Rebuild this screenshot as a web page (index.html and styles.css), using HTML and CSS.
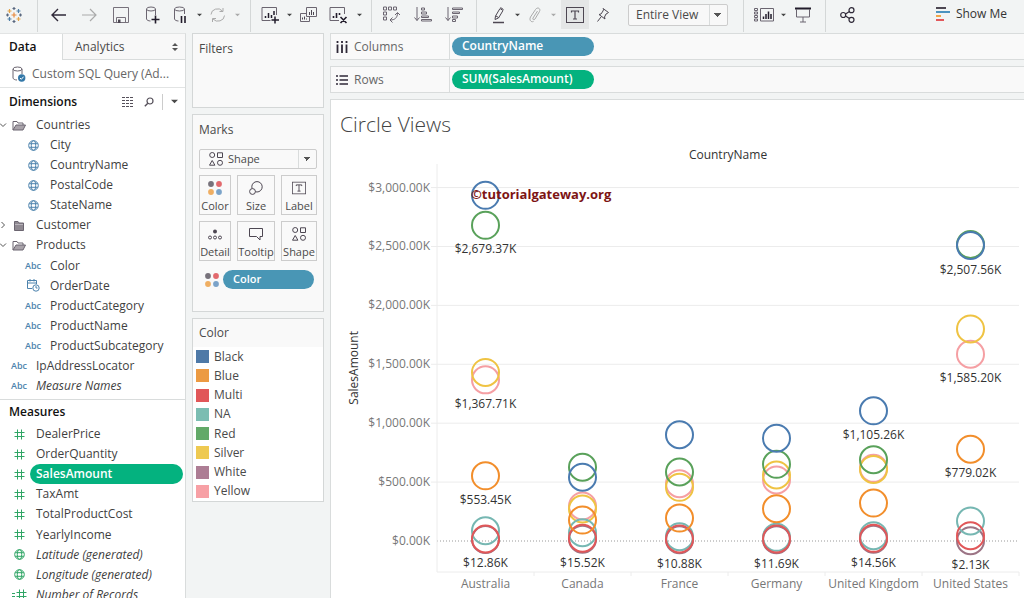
FILE: index.html
```html
<!DOCTYPE html>
<html lang="en">
<head>
<meta charset="utf-8">
<title>Circle Views</title>
<meta name="viewport" content="width=device-width, initial-scale=1">
<link rel="stylesheet" href="styles.css">
</head>
<body>
<svg class="defs" aria-hidden="true">
  <symbol id="globe" viewBox="0 0 11 11"><g fill="none" stroke="currentColor"><circle cx="5.500" cy="5.500" r="4.800"/><ellipse cx="5.500" cy="5.500" rx="2.200" ry="4.800"/><path d="M1.200 3.700h8.600M1.200 7.300h8.600"/></g></symbol>
  <symbol id="hash" viewBox="0 0 11 11"><path d="M3.500 .5v10M7.500 .5v10M.5 3.500h10M.5 7.500h10" fill="none" stroke="currentColor"/></symbol>
  <symbol id="folder-open" viewBox="0 0 14 11"><path d="M1 10V1.500h4l1 1.500h5v2" fill="none" stroke="#6b6570"/><path d="M1 10l3-5h9.500l-2.500 5z" fill="#a9a3aa" stroke="#6b6570"/></symbol>
  <symbol id="folder" viewBox="0 0 14 11"><path d="M2.500 10.500V1.500h3.500l1 1.500h4.500v7.500z" fill="#8f8991" stroke="#6b6570"/><path d="M3 4.500h8" stroke="#b9b4bb"/></symbol>
  <symbol id="chev-down" viewBox="0 0 8 8"><path d="M0 2.500l3 3 3-3" fill="none" stroke="#555"/></symbol>
  <symbol id="chev-right" viewBox="0 0 8 8"><path d="M1.500 1l3 3-3 3" fill="none" stroke="#555"/></symbol>
  <symbol id="caret" viewBox="0 0 6 4"><path d="M0 .5h6l-3 3z" fill="currentColor"/></symbol>
  <symbol id="shapes" viewBox="0 0 14 14"><g fill="none" stroke="#4d4752"><circle cx="3.200" cy="3" r="2.500"/><path d="M8.500 .8h5v4.700h-5zM3.200 8.500l2.700 4.700H.5z"/><circle cx="11" cy="10.800" r="2.500"/></g></symbol>
  <symbol id="dots" viewBox="0 0 14 14"><circle cx="3" cy="3" r="2.900" fill="#77727b"/><circle cx="11" cy="3" r="2.900" fill="#e2696d"/><circle cx="3" cy="11" r="2.900" fill="#efae62"/><circle cx="11" cy="11" r="2.900" fill="#7ba3c9"/></symbol>
  <symbol id="letter-frame" viewBox="0 0 18 16"><rect x=".5" y=".5" width="17" height="15" fill="none" stroke="#4d4752"/><path d="M5.500 5.500V4h7v1.500M9 4v8M7 12h4" fill="none" stroke="#4d4752" stroke-width="1.200"/></symbol>
</svg>

<div class="app">
<header class="toolbar">
  <div class="group logo">
    <svg width="16" height="16" viewBox="0 0 16 16" fill="none" stroke-width="1.200"><path stroke="#e8893c" d="M8 5.500v5M5.500 8h5"/><path stroke="#e2a24a" d="M3.500 2v4M1.500 4h4M12.500 10v4M10.500 12h4"/><path stroke="#4f7fa8" d="M12.500 2v4M10.500 4h4M3.500 10v4M1.500 12h4"/><path stroke="#59677f" d="M8 0v3M6.500 1.500h3M8 13v3M6.500 14.500h3M1.500 6.500v3M0 8h3M14.500 6.500v3M13 8h3"/></svg>
  </div>
  <div class="group g-file">
    <button class="tb w31" aria-label="Undo"><svg width="17" height="14" viewBox="0 0 17 14"><path d="M16 7H2M8 1L2 7l6 6" fill="none" stroke="#2f2938" stroke-width="1.400"/></svg></button>
    <button class="tb w31" aria-label="Redo"><svg width="17" height="14" viewBox="0 0 17 14"><path d="M1 7h14M9 1l6 6-6 6" fill="none" stroke="#aaa" stroke-width="1.200"/></svg></button>
    <button class="tb w31" aria-label="Save"><svg width="16" height="16" viewBox="0 0 16 16"><path d="M.5 .5h15v15H.5zM3.500 15.500v-5h9v5" fill="none" stroke="#77717b"/><path d="M5 12.500h2.500V16H5z" fill="#4d4752"/></svg></button>
    <button class="tb w31" aria-label="New data source"><svg width="16" height="18" viewBox="0 0 16 18"><g fill="none" stroke="#6b6570"><ellipse cx="7" cy="3" rx="4.500" ry="2"/><path d="M2.500 3v10c0 1 2 2 4 2M11.500 3v6"/></g><path d="M11.500 9.500v8M7.500 13.500h8" stroke="#221c2b" stroke-width="1.600"/></svg></button>
    <button class="tb w26" aria-label="Pause auto updates"><svg width="14" height="18" viewBox="0 0 14 18"><g fill="none" stroke="#6b6570"><ellipse cx="6.500" cy="3" rx="5" ry="2"/><path d="M1.500 3v10c0 1 2 2 4 2M11.500 3v5"/></g><path d="M8.500 10v7M12 10v7" stroke="#221c2b" stroke-width="1.600"/></svg></button>
    <button class="tb w12" aria-label="Pause options"><svg width="5" height="4"><use href="#caret"/></svg></button>
    <button class="tb w26 off" aria-label="Refresh"><svg width="18" height="16" viewBox="0 0 18 16"><path d="M2 7.500a6.500 6 0 0 1 11.500-3.500M15.500 8.500a6.500 6 0 0 1-11.500 3.500M10.500 4.500h3.500V1M7 11.500H3.500V15" fill="none" stroke="currentColor"/></svg></button>
    <button class="tb w12 off" aria-label="Refresh options"><svg width="5" height="4"><use href="#caret"/></svg></button>
  </div>
  <div class="group g-sheet">
    <button class="tb w26" aria-label="New worksheet"><svg width="19" height="18" viewBox="0 0 19 18"><path d="M9.500 14.500H1V1.500h14.500V9" fill="none" stroke="#6b6570"/><path d="M4.500 12v-2M7.500 12V7M10.500 12V9M13 9V5M14 10.500v7M10.500 14h7.500" stroke="#221c2b" stroke-width="1.500"/></svg></button>
    <button class="tb w12" aria-label="Worksheet options"><svg width="5" height="4"><use href="#caret"/></svg></button>
    <button class="tb w28" aria-label="Duplicate"><svg width="18" height="16" viewBox="0 0 18 16"><path d="M6.500 .5h10v9h-10zM6.500 6.500h-6v8h9v-5" fill="none" stroke="#6b6570"/><path d="M9.500 8V5M11.500 8V3M13.500 8V5M2.500 12.500v-2M4.500 12.500v-3M6.500 12.500v-1" stroke="#4d4752"/></svg></button>
    <button class="tb w30" aria-label="Clear sheet"><svg width="19" height="18" viewBox="0 0 19 18"><path d="M10 14.500H1V1.500h14.500V8" fill="none" stroke="#6b6570"/><path d="M4.500 12v-2M7.500 12V7M10.500 9V7M11.500 11l6 6M17.500 11l-6 6" stroke="#221c2b" stroke-width="1.600"/></svg></button>
    <button class="tb w12" aria-label="Clear options"><svg width="5" height="4"><use href="#caret"/></svg></button>
  </div>
  <div class="group g-sort">
    <button class="tb w31" aria-label="Swap rows and columns"><svg width="17" height="17" viewBox="0 0 17 17"><path d="M.5 1h3v3h-3zM5.500 1h3v3h-3zM10.500 1h3v3h-3zM.5 6h3v3h-3zM.5 11h3v3h-3zM14.500 7c0 5-3 7-7 7M12 9l2.500-2.500L17 9M9.500 11.500L7 14l2.500 2.500" fill="none" stroke="#6b6570"/></svg></button>
    <button class="tb w31" aria-label="Sort ascending"><svg width="18" height="15" viewBox="0 0 18 15"><path d="M3 0v13.500M.5 10.500L3 13.500l2.500-3M7.500 1h3v2h-3zM7.500 5h5v2h-5zM7.500 9h7v1.500h-7zM7.500 12.500h10v1.500h-10z" fill="none" stroke="#6b6570"/></svg></button>
    <button class="tb w31" aria-label="Sort descending"><svg width="18" height="15" viewBox="0 0 18 15"><path d="M3 0v13.500M.5 10.500L3 13.500l2.500-3M7.500 1h10v1.500h-10zM7.500 5h7v1.500h-7zM7.500 9h5v2h-5zM7.500 12.500h3v2h-3z" fill="none" stroke="#6b6570"/></svg></button>
  </div>
  <div class="group g-format">
    <button class="tb w26" aria-label="Highlight"><svg width="13" height="18" viewBox="0 0 13 18"><path d="M3.500 10L8 2.500l3 2-4.500 7.500-3.500 1.500zM8.500 1.500l3 2M4 10l2.500 1.500" fill="none" stroke="#4d4752"/><path d="M1 16.500h11" stroke="#4d4752" stroke-width="1.500"/></svg></button>
    <button class="tb w12" aria-label="Highlight options"><svg width="5" height="4"><use href="#caret"/></svg></button>
    <button class="tb w24 off" aria-label="Group members"><svg width="12" height="16" viewBox="0 0 12 16"><path d="M8.500 4L4 11c-.8 1.600 1 2.500 2 1l4.500-7.500c1.500-3-2-5-4-2L1.500 10c-1.500 3 .5 5.500 3 4.500" fill="none" stroke="currentColor"/></svg></button>
    <button class="tb w12 off" aria-label="Group options"><svg width="5" height="4"><use href="#caret"/></svg></button>
    <button class="tb on" aria-label="Show mark labels"><svg width="18" height="16"><use href="#letter-frame"/></svg></button>
    <button class="tb w28" aria-label="Fix axes"><svg width="14" height="16" viewBox="0 0 14 16"><path d="M7 1.500l5.500 4-1.500 1-1 .5-1.500 3 .5 2-6-4.500 2-.5 2-3 .5-1.500zM5 10l-3.500 4.500" fill="none" stroke="#4d4752"/></svg></button>
    <select class="fit" aria-label="Fit"><option>Entire View</option></select>
  </div>
  <div class="group g-show">
    <button class="tb w26" aria-label="Show cards"><svg width="20" height="14" viewBox="0 0 20 14"><path d="M.5 .5h3v2h-3zM.5 4h3v2h-3zM.5 7.500h3v2h-3zM.5 11h3v2h-3zM6.500 .5h13v12.500h-13z" fill="none" stroke="#6b6570"/><path d="M9.500 11V8.500M12 11V6M14.500 11V3.500M17 11V6" stroke="#221c2b" stroke-width="1.500"/></svg></button>
    <button class="tb w12" aria-label="Card options"><svg width="5" height="4"><use href="#caret"/></svg></button>
    <button class="tb w28" aria-label="Presentation mode"><svg width="16" height="16" viewBox="0 0 16 16"><path d="M0 1.500h16" stroke="#221c2b" stroke-width="2"/><path d="M1.500 2v8h13V2M8 10v5M5 15h6" fill="none" stroke="#6b6570"/></svg></button>
  </div>
  <button class="tb share" aria-label="Share"><svg width="15" height="16" viewBox="0 0 15 16"><g fill="none" stroke="#2f2938" stroke-width="1.200"><circle cx="3.200" cy="8" r="2.500"/><circle cx="11.500" cy="3.200" r="2.500"/><circle cx="11.500" cy="12.800" r="2.500"/><path d="M5.500 7l4-2.500M5.500 9l4 2.500"/></g></svg></button>
  <button class="showme"><svg width="14" height="14" viewBox="0 0 14 14"><path d="M0 1h10" stroke="#4d4752" stroke-width="2"/><path d="M0 5h14" stroke="#4c93c0" stroke-width="2"/><path d="M0 9h5" stroke="#f0a54a" stroke-width="2"/><path d="M0 13h8" stroke="#e2575b" stroke-width="2"/></svg>Show Me</button>
</header>

<main class="work">
  <aside class="data">
    <div class="tabs"><button class="tab active">Data</button><button class="tab">Analytics<svg width="6" height="8" viewBox="0 0 6 8"><path d="M0 3h6L3 0zM0 5h6L3 8z" fill="#555"/></svg></button></div>
    <div class="source"><svg width="14" height="16" viewBox="0 0 14 16"><g fill="none" stroke="#6b6570"><ellipse cx="5.500" cy="3" rx="4.500" ry="2"/><path d="M1 3v9c0 1 2 2 4 2M10 3v5"/></g><circle cx="9.700" cy="12" r="3.700" fill="#3378a8"/><path d="M8 12l1.300 1.300 2.300-2.600" fill="none" stroke="#fff"/></svg><span>Custom SQL Query (Ad...</span></div>
    <section class="fields">
      <div class="fields-head"><h2>Dimensions</h2>
        <button aria-label="View fields"><svg width="12" height="10" viewBox="0 0 12 10"><path d="M0 .5h12M0 3.500h12M0 6.500h12M0 9.500h12" stroke="#55505a" stroke-dasharray="3 1"/></svg></button>
        <button aria-label="Find field"><svg width="10" height="10" viewBox="0 0 10 10"><circle cx="6" cy="4" r="3" fill="none" stroke="#55505a" stroke-width="1.200"/><path d="M3.800 6.200L.8 9.200" stroke="#55505a" stroke-width="1.400"/></svg></button>
        <button class="menu" aria-label="Dimensions menu"><svg width="7" height="5"><use href="#caret"/></svg></button>
      </div>
      <ul class="list dims">
        <li class="folder"><svg class="chev"><use href="#chev-down"/></svg><svg class="fold"><use href="#folder-open"/></svg>Countries</li>
        <li class="child"><i><svg class="ic"><use href="#globe"/></svg></i>City</li>
        <li class="child"><i><svg class="ic"><use href="#globe"/></svg></i>CountryName</li>
        <li class="child"><i><svg class="ic"><use href="#globe"/></svg></i>PostalCode</li>
        <li class="child"><i><svg class="ic"><use href="#globe"/></svg></i>StateName</li>
        <li class="folder"><svg class="chev"><use href="#chev-right"/></svg><svg class="fold"><use href="#folder"/></svg>Customer</li>
        <li class="folder"><svg class="chev"><use href="#chev-down"/></svg><svg class="fold"><use href="#folder-open"/></svg>Products</li>
        <li class="child"><i>Abc</i>Color</li>
        <li class="child"><i><svg width="13" height="13" viewBox="0 0 13 13"><path d="M5 9.500H.5v-8h9V5M.5 4h9M3 0v2.500M7 0v2.500" fill="none" stroke="currentColor"/><circle cx="9" cy="9" r="3.200" fill="#fff" stroke="currentColor"/><path d="M9 7v2h1.500" fill="none" stroke="currentColor"/></svg></i>OrderDate</li>
        <li class="child"><i>Abc</i>ProductCategory</li>
        <li class="child"><i>Abc</i>ProductName</li>
        <li class="child"><i>Abc</i>ProductSubcategory</li>
        <li><i>Abc</i>IpAddressLocator</li>
        <li><i>Abc</i><em>Measure Names</em></li>
      </ul>
    </section>
    <section class="fields measures">
      <div class="fields-head"><h2>Measures</h2></div>
      <ul class="list meas">
        <li><i><svg class="ic"><use href="#hash"/></svg></i>DealerPrice</li>
        <li><i><svg class="ic"><use href="#hash"/></svg></i>OrderQuantity</li>
        <li class="picked"><i><svg class="ic"><use href="#hash"/></svg></i><b>SalesAmount</b></li>
        <li><i><svg class="ic"><use href="#hash"/></svg></i>TaxAmt</li>
        <li><i><svg class="ic"><use href="#hash"/></svg></i>TotalProductCost</li>
        <li><i><svg class="ic"><use href="#hash"/></svg></i>YearlyIncome</li>
        <li><i><svg class="ic"><use href="#globe"/></svg></i><em>Latitude (generated)</em></li>
        <li><i><svg class="ic"><use href="#globe"/></svg></i><em>Longitude (generated)</em></li>
        <li><i><svg width="15" height="11" viewBox="0 0 15 11"><path d="M0 4.500h3M0 7.500h3M7.500 .5v10M11.500 .5v10M4.500 3.500h10M4.500 7.500h10" fill="none" stroke="currentColor"/></svg></i><em>Number of Records</em></li>
      </ul>
    </section>
  </aside>

  <div class="cards">
    <section class="card filters"><h3>Filters</h3></section>
    <section class="card marks">
      <h3>Marks</h3>
      <div class="marktype"><svg width="14" height="14"><use href="#shapes"/></svg><select aria-label="Mark type"><option>Shape</option></select></div>
      <div class="markbtns">
        <button><svg width="14" height="14"><use href="#dots"/></svg>Color</button>
        <button><svg width="14" height="14" viewBox="0 0 14 14"><g fill="#f9f9f9" stroke="#4d4752"><circle cx="8" cy="5.800" r="5.200"/><circle cx="3.500" cy="10.500" r="2.900"/></g></svg>Size</button>
        <button><svg width="14" height="14"><use href="#letter-frame"/></svg>Label</button>
        <button><svg width="14" height="14" viewBox="0 0 14 14"><circle cx="7" cy="4.500" r="2" fill="#4d4752"/><g fill="none" stroke="#4d4752"><circle cx="2" cy="10.500" r="1.500"/><circle cx="7" cy="10.500" r="1.500"/><circle cx="12" cy="10.500" r="1.500"/></g></svg>Detail</button>
        <button><svg width="14" height="14" viewBox="0 0 14 14"><path d="M.5 1.500h13v8h-2.500v3.500l-3.500-3.500h-7z" fill="none" stroke="#4d4752"/></svg>Tooltip</button>
        <button><svg width="14" height="14"><use href="#shapes"/></svg>Shape</button>
      </div>
      <div class="encoding"><svg width="14" height="14"><use href="#dots"/></svg><span class="pill blue">Color</span></div>
    </section>
    <section class="card legend">
      <h3>Color</h3>
      <ul>
        <li><span class="sw black"></span>Black</li>
        <li><span class="sw orange"></span>Blue</li>
        <li><span class="sw multi"></span>Multi</li>
        <li><span class="sw na"></span>NA</li>
        <li><span class="sw green"></span>Red</li>
        <li><span class="sw silver"></span>Silver</li>
        <li><span class="sw white"></span>White</li>
        <li><span class="sw pink"></span>Yellow</li>
      </ul>
    </section>
  </div>

  <div class="sheet">
    <div class="shelf"><div class="shelf-name"><svg width="12" height="12" viewBox="0 0 12 12"><path d="M1.500 0v2M6 0v2M10.500 0v2M1.500 3.500V12M6 3.500V12M10.500 3.500V12" stroke="#2f2938" stroke-width="1.800"/></svg>Columns</div><span class="pill blue">CountryName</span></div>
    <div class="shelf"><div class="shelf-name"><svg width="12" height="10" viewBox="0 0 12 10"><path d="M0 1h2M0 5h2M0 9h2M3.500 1H12M3.500 5H12M3.500 9H12" stroke="#2f2938" stroke-width="1.600"/></svg>Rows</div><span class="pill green">SUM(SalesAmount)</span></div>
    <section class="view">
      <h1>Circle Views</h1>
      <div class="chart">
        <div class="colhead">CountryName</div>
        <div class="ytitle"><span>SalesAmount</span></div>
        <svg class="plot" id="plot" role="img" aria-label="Sales amount by country and color"></svg>
        <div class="countries" id="countries"></div>
      </div>
    </section>
  </div>
</main>
</div>
<script src="chart.js"></script>
</body>
</html>
```
FILE: styles.css
```css
* { box-sizing: border-box; }
body { margin: 0; background: #f2f4f4; color: #4a4a4a; font: 12px/16px "Open Sans", "Noto Sans", sans-serif; }
button, select { font: inherit; color: inherit; background: none; border: 0; padding: 0; margin: 0; }
h1, h2, h3, ul { margin: 0; padding: 0; font-weight: 400; font-size: inherit; list-style: none; }
.defs { position: absolute; width: 0; height: 0; }
.app { display: flex; flex-direction: column; height: 100vh; overflow: hidden; }

.toolbar { display: flex; flex: none; height: 32px; }
.group { display: flex; align-items: center; border-right: 1px solid #d4d7d7; padding-bottom: 3px; }
.logo { padding-left: 6px; padding-right: 15px; }
.g-file { padding-left: 5px; padding-right: 7px; }
.g-sheet { padding-left: 6px; padding-right: 6px; }
.g-sort { padding-left: 4px; padding-right: 7px; }
.g-format { padding-left: 8px; padding-right: 15px; }
.g-show { padding-left: 7px; padding-right: 8px; }
.tb { display: flex; align-items: center; justify-content: center; flex: none; height: 29px; color: #444; }
.tb svg { flex: none; }
.w12 { width: 12px; }
.w24 { width: 24px; }
.w26 { width: 26px; }
.w28 { width: 28px; }
.w30 { width: 30px; }
.w31 { width: 31px; }
.off { color: #aaa; }
.on { width: 28px; margin-left: 2px; background: #e4e6e6; }
.fit, .marktype select {
  appearance: none;
  background: linear-gradient(#d9dcdc, #d9dcdc) right 17px top 0 / 1px 100% no-repeat,
    linear-gradient(135deg, #555 50%, transparent 50%) right 5px center / 4px 4px no-repeat,
    linear-gradient(225deg, #555 50%, transparent 50%) right 9px center / 4px 4px no-repeat;
}
.fit { width: 100px; height: 22px; margin-left: 11px; padding-left: 7px; border: 1px solid #ccc; background-color: #f8f8f8; border-radius: 2px; }
.share { width: 28px; margin-left: 7px; }
.showme { display: flex; align-items: center; gap: 6px; height: 28px; margin-left: auto; padding-right: 17px; color: #333; }

.work { display: grid; grid-template-columns: 186px 132px minmax(0, 1fr); gap: 6px; flex: 1; min-height: 0; padding-top: 1px; }
.data { background: #fff; border-right: 1px solid #d9dcdc; border-top: 1px solid #e2e4e4; min-height: 0; overflow: hidden; }
.tabs { display: flex; height: 26px; }
.tab { padding-left: 12px; background: #f8f8f8; border-left: 1px solid #d9dcdc; border-bottom: 1px solid #d9dcdc; flex: 1; display: flex; align-items: center; justify-content: space-between; padding-right: 7px; }
.tab.active { flex: none; width: 62px; padding-left: 9px; background: #fff; border: 0; font-weight: 600; color: #111; }
.source { display: flex; align-items: center; gap: 6px; height: 28px; padding-left: 12px; border-bottom: 1px solid #e2e4e4; color: #666; white-space: nowrap; }
.fields-head { display: flex; align-items: center; height: 27px; padding-left: 9px; padding-right: 7px; gap: 10px; }
.fields-head h2 { flex: 1; font-weight: 600; color: #111; }
.fields-head button { display: flex; align-items: center; height: 16px; }
.fields-head .menu { border-left: 1px solid #ccc; padding-left: 8px; margin-left: -2px; }
.list { display: grid; grid-auto-rows: 1fr; color: #3f3f3f; }
.list li { display: flex; align-items: center; white-space: nowrap; }
.list i { display: flex; align-items: center; justify-content: center; width: 28px; margin-left: 5px; margin-right: 3px; font-style: normal; font-size: 9px; font-weight: 600; color: #4d83ad; }
.list .child i { margin-left: 19px; }
.chev { width: 8px; height: 8px; margin-right: 4px; }
.fold { width: 14px; height: 11px; margin-right: 10px; }
.ic { width: 11px; height: 11px; }
.dims { height: 281px; }
.meas { height: 181px; }
.measures { margin-top: 3px; border-top: 1px solid #d9dcdc; }
.measures .fields-head { height: 24px; }
.list.meas i { color: #2fa565; }
.picked b { flex: 1; height: 20px; line-height: 20px; margin-left: -6px; padding-left: 6px; margin-right: 2px; border-radius: 10px; background: #04b27f; color: #fff; font-weight: 600; }

.cards { display: flex; flex-direction: column; gap: 6px; }
.card { border: 1px solid #d4d7d7; background: #f9f9f9; }
.card h3 { padding-left: 6px; }
.filters { height: 75px; padding-top: 7px; }
.marks { height: 198px; padding-top: 7px; }
.marktype { display: flex; align-items: center; margin: 11px 6px 6px; height: 20px; border: 1px solid #ccc; border-radius: 2px; padding-left: 9px; gap: 5px; font-size: 11px; }
.marktype select { flex: 1; height: 18px; }
.markbtns { display: grid; grid-template-columns: 32px 38px 36px; gap: 6px; padding-left: 6px; }
.markbtns button { display: flex; flex-direction: column; align-items: center; justify-content: space-between; height: 40px; padding-top: 5px; border: 1px solid #ccc; font-size: 11px; line-height: 16px; }
.encoding { display: flex; align-items: center; gap: 4px; padding: 9px 9px 0 12px; }
.pill { border-radius: 10px; height: 19px; line-height: 18px; padding-left: 10px; color: #fff; font-weight: 600; }
.pill.blue { background: #4996b5; }
.pill.green { background: #04b27f; }
.encoding .pill { flex: 1; font-size: 11px; }
.legend h3 { padding-top: 6px; height: 28px; }
.legend ul { display: grid; grid-auto-rows: 1fr; height: 154px; background: #fff; }
.legend li { display: flex; align-items: center; gap: 5px; padding-left: 3px; }
.sw { width: 13px; height: 13px; }
.black { background: #4e79a7; }
.orange { background: #ec9a42; }
.multi { background: #e15759; }
.na { background: #7bbdb2; }
.green.sw { background: #62a968; }
.silver { background: #eec951; }
.white { background: #ad7d94; }
.pink { background: #f7a0a5; }

.sheet { display: flex; flex-direction: column; gap: 6px; min-height: 0; }
.shelf { display: flex; align-items: center; gap: 2px; flex: none; height: 27px; border: 1px solid #d9dcdc; border-right: 0; background: #f9f9f9; }
.shelf-name { display: flex; align-items: center; gap: 6px; width: 119px; height: 100%; padding-left: 5px; border-right: 1px solid #d9dcdc; color: #666; }
.shelf .pill { width: 142px; }
.view { display: flex; flex-direction: column; flex: 1; min-height: 0; border: solid #d9dcdc; border-width: 1px 0 0 1px; background: #fff; }
.view h1 { padding: 12px 0 11px 9px; font-size: 21px; line-height: 25px; font-weight: 300; color: #444; }
.chart { display: grid; flex: 1; min-height: 0; grid-template-columns: 106px minmax(0, 1fr); grid-template-rows: 16px minmax(0, 1fr) 26px; padding-right: 5px; }
.colhead { grid-column: 2; text-align: center; line-height: 13px; color: #333; }
.ytitle { display: flex; align-items: center; padding-left: 15px; color: #333; }
.ytitle span { writing-mode: vertical-rl; transform: rotate(180deg); }
.plot { width: 100%; height: 100%; overflow: visible; }
.plot text { font-size: 12px; }
.plot .tick { fill: #777; text-anchor: end; }
.plot .value { fill: #333; text-anchor: middle; }
.plot .mark { fill: none; stroke-width: 2; }
.plot .credit { fill: #7d1414; font-size: 13px; font-weight: 700; }
.grid { stroke: #ececec; }
.zero { stroke: #999; stroke-dasharray: 1 2; }
.countries { grid-column: 2; display: grid; grid-template-columns: repeat(6, 1fr); text-align: center; color: #777; }
.countries span { padding-top: 4px; white-space: nowrap; line-height: 16px; }
```
FILE: chart.js
```js
const TOP = 3200, BOTTOM = -263;
const COLORS = { Yellow: '#f59fa3', White: '#9c7485', Silver: '#efc343', Red: '#59a15a', NA: '#76b7b2', Multi: '#e15759', Blue: '#f28e2b', Black: '#4a7bb0' };
const ORDER = Object.keys(COLORS);
const DATA = [
  { country: 'Australia', Black: 2934, Red: 2679.37, Silver: 1431, Yellow: 1367.71, Blue: 553.45, NA: 87, Multi: 17, White: 12.86, labels: ['Red', 'Yellow', 'Blue', 'White'] },
  { country: 'Canada', Red: 626, Black: 541, Yellow: 297, Silver: 272, Blue: 178, NA: 70, Multi: 24, White: 15.52, labels: ['White'] },
  { country: 'France', Black: 902, Red: 586, Yellow: 486, Silver: 456, Blue: 195, NA: 37, Multi: 18, White: 10.88, labels: ['White'] },
  { country: 'Germany', Black: 872, Red: 651, Silver: 560, Yellow: 518, Blue: 274, NA: 31, Multi: 18, White: 11.69, labels: ['White'] },
  { country: 'United Kingdom', Black: 1105.26, Red: 690, Yellow: 617, Silver: 608, Blue: 322, NA: 45, Multi: 23, White: 14.56, labels: ['Black', 'White'] },
  { country: 'United States', Red: 2517, Black: 2507.56, Silver: 1800, Yellow: 1585.2, Blue: 779.02, NA: 170, Multi: 45, White: 2.13, labels: ['Black', 'Yellow', 'Blue', 'White'] }
];
const plot = document.getElementById('plot');
const y = v => ((TOP - v) / (TOP - BOTTOM) * 100).toFixed(3) + '%';
const money = v => '$' + v.toLocaleString('en-US', { minimumFractionDigits: 2, maximumFractionDigits: 2 }) + 'K';

function add(tag, attrs, text) {
  const node = document.createElementNS('http://www.w3.org/2000/svg', tag);
  for (const key in attrs) node.setAttribute(key, attrs[key]);
  if (text) node.textContent = text;
  plot.append(node);
}

for (let v = 0; v <= 3000; v += 500) {
  add('line', { class: v ? 'grid' : 'zero', x1: v ? -6 : 0, x2: '100%', y1: y(v), y2: y(v) });
  add('text', { class: 'tick', x: -7, y: y(v), dy: 4 }, money(v));
}
add('line', { class: 'grid', x1: 0, x2: 0, y1: 0, y2: '100%' });
add('line', { class: 'grid', x1: 0, x2: '100%', y1: '100%', y2: '100%' });

DATA.forEach((row, i) => {
  const x = ((i + 0.5) / DATA.length * 100) + '%';
  const edge = ((i + 1) / DATA.length * 100) + '%';
  add('svg', { x: edge, y: '100%', overflow: 'visible' });
  const tick = document.createElementNS('http://www.w3.org/2000/svg', 'line');
  tick.setAttribute('class', 'grid');
  tick.setAttribute('y2', 4);
  plot.lastChild.append(tick);
  ORDER.forEach(c => add('circle', { class: 'mark', cx: x, cy: y(row[c]), r: 13.5, stroke: COLORS[c] }));
  row.labels.forEach(c => add('text', { class: 'value', x, y: y(row[c]), dy: 28 }, money(row[c])));
  const label = document.createElement('span');
  label.textContent = row.country;
  document.getElementById('countries').append(label);
});
add('text', { class: 'credit', x: 34, y: y(2934), dy: 4 }, '©tutorialgateway.org');
```
